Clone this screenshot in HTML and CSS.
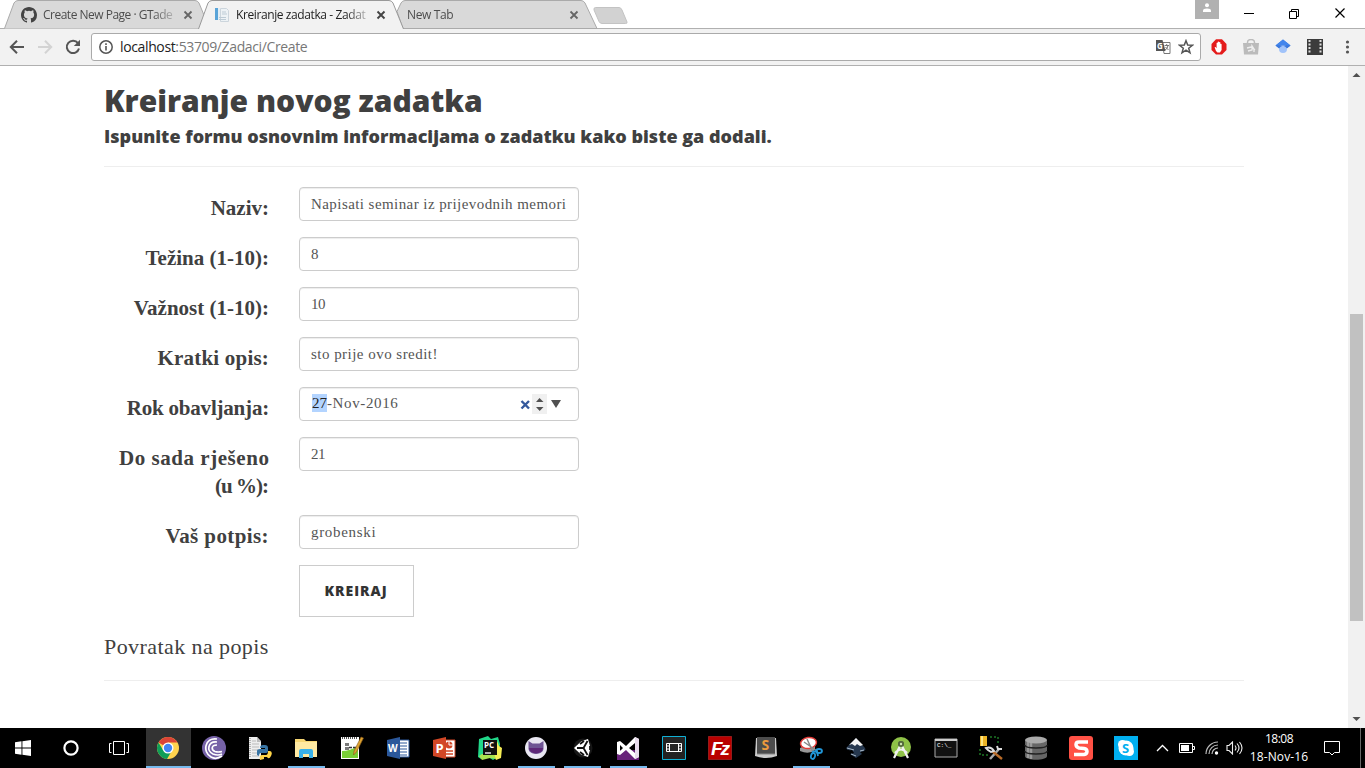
FILE: index.html
```html
<!DOCTYPE html>
<html lang="hr">
<head>
<meta charset="utf-8">
<title>Kreiranje zadatka</title>
<link rel="stylesheet" href="styles.css">
</head>
<body>
<div class="desktop">
  <header class="tabstrip">
    <div class="tab">
      <svg class="tab-shape" width="206" height="29"><path d="M0.5 28.5L10 3Q11.5 .5 14 .5H191Q193.500 .5 195 3L205.500 28.5" fill="#d9d9d9" stroke="#aaa"/></svg>
      <svg class="fav" width="16" height="16" viewBox="0 0 16 16"><path fill="#444" d="M8 0C3.580 0 0 3.580 0 8c0 3.540 2.290 6.530 5.470 7.590.4.070.55-.17.55-.38v-1.490c-2.010.37-2.530-.49-2.690-.94-.09-.23-.48-.94-.82-1.130-.28-.15-.68-.52-.01-.53.63-.01 1.080.58 1.230.82.72 1.210 1.870.87 2.330.66.07-.52.28-.87.51-1.070-1.780-.2-3.640-.89-3.640-3.950 0-.87.31-1.590.82-2.150-.08-.2-.36-1.020.08-2.120 0 0 .67-.21 2.200.82a7.600 7.600 0 014 0c1.530-1.040 2.200-.82 2.200-.82.44 1.100.16 1.920.08 2.120.51.56.82 1.270.82 2.150 0 3.070-1.870 3.750-3.650 3.950.29.25.54.73.54 1.480v2.200c0 .21.15.46.55.38A8 8 0 0016 8c0-4.420-3.580-8-8-8z"/></svg>
      <span class="tab-title tab-one">Create New Page · GTade</span>
      <svg class="close" width="10" height="10"><path d="M1.500 1.500l7 7m0-7l-7 7" stroke="#666" stroke-width="1.800"/></svg>
    </div>
    <div class="tab active">
      <svg class="tab-shape" width="206" height="29"><path d="M0.500 29L10 3Q11.500 .5 14 .5H191Q193.500 .5 195 3L205.500 29" fill="#f2f2f2" stroke="#999"/></svg>
      <svg class="fav" width="16" height="16"><path d="M1 1h3v12H1z" fill="#59a4d8"/><path d="M4 1h2v12H4z" fill="#e3eef5"/><path d="M6.500 1.500h6l2 2v11h-8z" fill="#edf2f5" stroke="#ccd5dc"/><path d="M8 5h4M8 7h5M5 10.500h7M5 12.500h7" stroke="#bdcbd5"/></svg>
      <span class="tab-title tab-two">Kreiranje zadatka - Zadat</span>
      <svg class="close" width="10" height="10"><path d="M1.500 1.500l7 7m0-7l-7 7" stroke="#444" stroke-width="1.900"/></svg>
    </div>
    <div class="tab plain">
      <svg class="tab-shape" width="206" height="29"><path d="M5 11.500L9 3Q10.500 .5 13 .5H189Q191.500 .5 193 3L205 28.500H11z" fill="#d9d9d9" stroke="#aaa"/></svg>
      <span class="tab-title tab-three">New Tab</span>
      <svg class="close" width="10" height="10"><path d="M1.500 1.500l7 7m0-7l-7 7" stroke="#666" stroke-width="1.800"/></svg>
    </div>
    <svg class="newtab" width="36" height="18"><path d="M2.500.5H26Q28 .5 29 3L34 15Q34.500 16.500 32.500 16.500H9Q7 16.500 6 14.500L1 3Q.5.5 2.500.5z" fill="#d2d2d2" stroke="#c3c3c3"/></svg>
    <div class="window-controls">
      <div class="user"><svg width="10" height="10"><circle cx="5" cy="2.200" r="2" fill="#fff"/><path d="M1 9V7.500Q1 5.500 5 5.500T9 7.500V9z" fill="#fff"/></svg></div>
      <svg class="caption" width="46" height="28"><path d="M17 13.500h10" stroke="#000"/></svg>
      <svg class="caption" width="46" height="28"><path d="M16.500 11.500h7v7h-7zM18.500 11V9.500h7v7H24" fill="none" stroke="#000"/></svg>
      <svg class="caption" width="46" height="28"><path d="M16.500 8.500l9 9m0-9l-9 9" stroke="#000" stroke-width="1.200"/></svg>
    </div>
  </header>
  <div class="toolbar">
    <svg width="16" height="16"><path d="M15 8H2.500M8 1.700L1.800 8L8 14.300" fill="none" stroke="#555" stroke-width="2"/></svg>
    <svg width="16" height="16"><path d="M1 8h12.500M8 1.700L14.200 8L8 14.300" fill="none" stroke="#d3d3d3" stroke-width="2"/></svg>
    <svg width="16" height="16"><path d="M13 4.200A6.200 6.200 0 1 0 14 9.500" fill="none" stroke="#555" stroke-width="2"/><path d="M15 .8v6.200H8.800z" fill="#555"/></svg>
    <div class="address">
      <svg width="14" height="14"><circle cx="7" cy="7" r="6.200" fill="none" stroke="#555" stroke-width="1.500"/><path d="M7 6v4.500M7 3.300v1.700" stroke="#555" stroke-width="1.600"/></svg>
      <span class="url"><b>localhost</b>:53709/Zadaci/Create</span>
      <svg class="translate" width="15" height="14"><path d="M6.500 2.500h7.500v11H8z" fill="#fff" stroke="#777"/><path d="M0 0h6.500L9.500 11H0z" fill="#555"/><text x="1" y="8.500" class="g-glyph">G</text><path d="M8.500 5.500h4.500M10.700 4v1.500M12 5.500Q11.500 9 9 10M9.500 7l3 3" stroke="#777" fill="none"/></svg>
      <svg width="16" height="16"><path d="M8 1.700l1.700 4.400 4.700.2-3.700 2.900 1.300 4.600L8 11.200l-4 2.600 1.300-4.600L1.600 6.300l4.700-.2z" fill="none" stroke="#555" stroke-width="1.500"/></svg>
    </div>
    <div class="extensions">
      <svg width="16" height="16"><path d="M5 .3h6L15.500 5v6L11 15.500H5L.5 11V5z" fill="#e41b1b"/><path d="M5 12L3.600 8.200l1-.3 1 1.300V4q.8-.8 1.200.1V7V2.800q.8-.8 1.300.1V7V3.300q.9-.7 1.300.2V7.500V5q.8-.6 1.200.2V11l-1.600 2.600H6.500z" fill="#fff"/></svg>
      <svg width="16" height="16"><path d="M0 4h16l-1 11.500H1z" fill="#bbb"/><path d="M4.500 5V3.500a3.500 3 0 0 1 7 0V5" fill="none" stroke="#bbb" stroke-width="1.500"/><path d="M5 12l4-1V7l2 3v3M4 9l4-1 4 3" stroke="#eee" stroke-width="1.300" fill="none"/></svg>
      <svg width="16" height="16"><path d="M8 .5l7.500 6L8 12.500L.5 6.500z" fill="#3b78dc"/><path d="M8 .5l7.500 6H.5z" fill="#4386ed"/><circle cx="8" cy="10" r="4" fill="#a1c3fa"/><path d="M.5 6.500L4 9.300Q8 4 12 9.300l3.500-2.800z" fill="#3b78dc"/></svg>
      <svg width="16" height="16"><path d="M0 0h16v16H0z" fill="#3c3c3c"/><path d="M2.500 1v14M13.500 1v14" stroke="#ddd" stroke-width="2" stroke-dasharray="2 1.500"/></svg>
      <svg width="16" height="16"><g fill="#555"><circle cx="8.500" cy="3" r="1.600"/><circle cx="8.500" cy="8" r="1.600"/><circle cx="8.500" cy="13" r="1.600"/></g></svg>
    </div>
  </div>
  <div class="viewport">
    <main class="page">
      <h2>Kreiranje novog zadatka</h2>
      <h4>Ispunite formu osnovnim informacijama o zadatku kako biste ga dodali.</h4>
      <hr>
      <div class="row"><label><span class="l1">Naziv:</span></label><div class="field"><span class="v1">Napisati seminar iz prijevodnih memori</span></div></div>
      <div class="row"><label><span class="l2">Težina (1-10):</span></label><div class="field">8</div></div>
      <div class="row"><label><span class="l3">Važnost (1-10):</span></label><div class="field"><span class="num">10</span></div></div>
      <div class="row"><label><span class="l4">Kratki opis:</span></label><div class="field"><span class="v4">sto prije ovo sredit!</span></div></div>
      <div class="row"><label><span class="l5">Rok obavljanja:</span></label><div class="field date"><span class="v5"><mark>27</mark>-Nov-2016</span>
        <svg class="date-controls" width="44" height="20"><path d="M2.500 7l7.500 7.500M10 7l-7.500 7.500" stroke="#34599c" stroke-width="2.400"/><path d="M13 0h15v20H13z" fill="#f0f0f0"/><path d="M17 8l3.500-4L24.500 8zM17 13l3.700 4L24.500 13zM32 6h10l-5 8z" fill="#505050"/></svg></div></div>
      <div class="row tall"><label><span class="l6">Do sada rješeno</span><br><span class="l7">(u %):</span></label><div class="field"><span class="num">21</span></div></div>
      <div class="row"><label><span class="l8">Vaš potpis:</span></label><div class="field"><span class="v8">grobenski</span></div></div>
      <button>KREIRAJ</button>
      <p><a>Povratak na popis</a></p>
      <hr>
    </main>
    <div class="scrollbar">
      <svg width="17" height="17"><path d="M4.500 11L8.500 7l4 4z" fill="#505050"/></svg>
      <div class="thumb"></div>
      <svg width="17" height="17"><path d="M4.500 6L8.500 10l4-4z" fill="#505050"/></svg>
    </div>
  </div>
  <footer class="taskbar">
    <div class="system">
      <svg width="16" height="16"><path d="M0 2.300L6.500 1.300V7.400H0zM7.400 1.200L16 0V7.400H7.400zM0 8.500H6.500V14.700L0 13.700zM7.400 8.500H16V16L7.400 14.800z" fill="#fff"/></svg>
      <svg width="16" height="16"><circle cx="8" cy="8" r="6.600" fill="none" stroke="#fff" stroke-width="2.200"/></svg>
      <svg width="20" height="16"><path d="M4.500 1.500h11v13h-11zM2.500 3.500h-2v9h2M17.500 3.500h2v9h-2" fill="none" stroke="#fff"/></svg>
    </div>
    <div class="apps">
      <div class="app current"><svg viewBox="0 0 24 24"><circle cx="12" cy="12" r="11" fill="#ffd34e"/><path d="M12 12L2.500 6.500A11 11 0 0 1 21.500 6.500H12z" fill="#db4437"/><path d="M2.500 6.500A11 11 0 0 0 11 23L16 14.500L7 14z" fill="#0f9d58"/><circle cx="12" cy="12" r="5.500" fill="#fff"/><circle cx="12" cy="12" r="4.200" fill="#4285f4"/></svg></div>
      <div class="app"><svg viewBox="0 0 24 24"><circle cx="12" cy="12" r="12" fill="#7662a7"/><g fill="none" stroke="#fff" stroke-width="1.700"><path d="M15 3C3 1 0 16 9 21q5 3 11-1"/><path d="M15 6C6 5 4 15 11 18q5 2 9 0"/><path d="M15 9C9 9 9 14 13 15.500q3 1 7 0"/></g></svg></div>
      <div class="app"><svg viewBox="0 0 24 24"><path d="M1 1h8l4 4v18H1z" fill="#eee"/><path d="M9 1l4 5H9z" fill="#bbb"/><path d="M4 5h4M4 8h7M4 11h7M4 14h6M4 17h6M4 20h7" stroke="#bbb"/><path d="M2 2v20" stroke="#777" stroke-dasharray="1 1"/><path d="M9 19v-4q0-2 3-2h5v-1h-5q0-3 3-3h2q3 0 3 3v3q0 2-3 2h-4q-2 0-2 3z" fill="#3874a3"/><path d="M12 24q-1-5 2-5h4q2 0 2-4h2q3 1 1 5t-4 1h-3v2z" fill="#ffd548"/></svg></div>
      <div class="app open"><svg viewBox="0 0 24 24"><path d="M1 3h9l2 2h11v16H1z" fill="#f7d673"/><path d="M1 6h22v15H1z" fill="#ffe9a2"/><path d="M5 22v-7q0-2 2-2h10q2 0 2 2v7h-4v-4H9v4z" fill="#39b0e8"/></svg></div>
      <div class="app"><svg viewBox="0 0 24 24"><path d="M1 1h18v22H1z" fill="#fff"/><path d="M2 15q8 0 16-5v12H2z" fill="#79cf36"/><path d="M2 2h16" stroke="#555" stroke-width="2" stroke-dasharray="1 1"/><path d="M6 7v8M8 7v8M9 11.500h7" stroke="#333" stroke-width="1.300" stroke-dasharray="3 1"/><path d="M21 1L14 15l-.5 4 3-3L23.500 2z" fill="#dca231" stroke="#865819" stroke-width=".6"/></svg></div>
      <div class="app"><svg viewBox="0 0 24 24"><path d="M12 4h11v17H12z" fill="#fff" stroke="#2b579a"/><path d="M13 7h8M13 10h8M13 13h8M13 16h8M13 19h8" stroke="#2b579a"/><path d="M1 4L14 1v22L1 20z" fill="#2b579a"/><text x="2" y="16" class="logo word">W</text></svg></div>
      <div class="app"><svg viewBox="0 0 24 24"><path d="M12 4h11v17H12z" fill="#fff" stroke="#d24726"/><circle cx="17" cy="9" r="3.500" fill="#d24726"/><path d="M17 5v4h4" fill="none" stroke="#fff"/><path d="M14 15h7M14 18h7" stroke="#d24726" stroke-width="1.500"/><path d="M1 4L14 1v22L1 20z" fill="#d24726"/><text x="3.500" y="17" class="logo ppt">P</text></svg></div>
      <div class="app"><svg viewBox="0 0 24 24"><path d="M1 3L10 0l3 3 7-2 2 7-2 13-5 3-5-3-7 2-3-2z" fill="#21d789"/><path d="M19 5l2 5 3 2-1 10-5 2-2-4z" fill="#f5ed55"/><path d="M1 20l3-2h12l2 5-6-1-8 2z" fill="#a8e34f"/><path d="M5 4h14v15H5z" fill="#101010"/><text x="6" y="12" class="logo pc">PC</text><path d="M7 17h6" stroke="#fff" stroke-width="1.300"/></svg></div>
      <div class="app open"><svg viewBox="0 0 24 24"><circle cx="12" cy="12" r="11" fill="#e9e7f2"/><path d="M4.500 5l4 2.500h7l4-2.500v6.500c1 8.500-16 8.500-15 0z" fill="#6e5494"/><path d="M5 12c1 7 13 7 14 0z" fill="#5d2778"/></svg></div>
      <div class="app open"><svg viewBox="0 0 24 24"><circle cx="13" cy="12" r="9.500" fill="#171717"/><path d="M4 12L11 5.500 18 3l2 7v4l-2 7-7-2.500z" fill="#fff"/><path d="M7 12h6.500l4-7M13.500 12l4 7M14 5l-4 3M14 19l-4-3M20 10v4" fill="none" stroke="#111" stroke-width="1.800"/></svg></div>
      <div class="app open"><svg viewBox="0 0 24 24"><path d="M1 14h22v10H1z" fill="#68217a"/><path d="M1 6l3-1 6 5 9-9 4 2v18l-4 2-9-9-6 5-3-1zM4 9v6l3-3zM19 7l-6 5 6 5z" fill="#fff" fill-rule="evenodd"/><path d="M19 1l4 2v18l-4 2z" fill="#e9dced"/></svg></div>
      <div class="app"><svg viewBox="0 0 24 24"><path d="M.5.500h23v23H.500z" fill="#222" stroke="#10b0d5"/><path d="M4.500 7.500h15v8h-15z" fill="#252525" stroke="#fff"/><path d="M7.500 7v9M16.500 7v9M4.500 10h3M4.500 13h3M16.500 10h3M16.500 13h3" stroke="#fff"/></svg></div>
      <div class="app"><svg viewBox="0 0 24 24"><path d="M.5.500h23v23H.500z" fill="#b90000" stroke="#d33434" stroke-dasharray="1 1"/><text x="3" y="19" class="logo fz">Fz</text></svg></div>
      <div class="app"><svg viewBox="0 0 24 24"><path d="M2 2h20l1 18q-11 4-22 0z" fill="#ccc"/><path d="M3 1h18v17H3z" fill="#4c4c4c"/><path d="M3 18h18" stroke="#888"/><text x="7.500" y="14" class="logo sublime">S</text></svg></div>
      <div class="app narrow open"><svg viewBox="0 0 24 24"><path d="M1 12q8-5 15-2v4q-6 5-15 1z" fill="#989898"/><ellipse cx="9.500" cy="7" rx="8" ry="5.500" fill="#fff" stroke="#e23c38" stroke-width="1.500" transform="rotate(-8 9.500 7)"/><path d="M8 3l6 13M5 6l13 9" stroke="#888" stroke-width="1.500"/><g fill="none" stroke="#2196d7" stroke-width="1.800"><ellipse cx="20" cy="15" rx="3" ry="2"/><ellipse cx="14" cy="20" rx="2" ry="3" transform="rotate(15 14 20)"/><path d="M13 16l5-1 1 5"/></g></svg></div>
      <div class="app narrow"><svg viewBox="0 0 24 24"><path d="M12 2L2 12q1 3 6 2l2 3-4 1 6 4 6-4-2-2q7-1 5-4z" fill="#26384f"/><path d="M12 2L5 9l3-1 3 2 2-2 3 2 3-1z" fill="#f4f4f4"/><path d="M3 12l7 2M7 18l5 2M16 15l4-1" stroke="#aabac9"/></svg></div>
      <div class="app narrow"><svg viewBox="0 0 24 24"><circle cx="12" cy="11" r="10" fill="#8fc248"/><circle cx="12" cy="8" r="3" fill="#617150"/><path d="M11 10L5 22M13 10l6 12M6 17q6-7 12 0" stroke="#f1f1f1" stroke-width="2.200" fill="none"/><circle cx="12" cy="8" r="3" fill="#52683a"/><circle cx="12" cy="8" r="1.200" fill="#cee5b5"/></svg></div>
      <div class="app narrow"><svg viewBox="0 0 24 24"><path d="M1 3h22v18H1z" fill="#111" stroke="#aaa"/><path d="M1 3h22v2H1z" fill="#ccc"/><text x="3" y="11" class="logo cmd">C:\_</text></svg></div>
      <div class="app narrow"><svg viewBox="0 0 24 24"><path d="M1 0h7v10H1z" fill="#edb526"/><path d="M2 0h2v10H2z" fill="#ffe783"/><path d="M11 1h8v8M1 13v6h8" fill="none" stroke="#2cb338" stroke-dasharray="2 2"/><path d="M20 13l-9 10" stroke="#aaa" stroke-width="2.500"/><path d="M13 15l10 8" stroke="#b86b28" stroke-width="2.500"/><path d="M7 12q5-2 8 3l-3 1-3-2zM18 10l1 3 4 0" fill="none" stroke="#ddd" stroke-width="2"/></svg></div>
      <div class="app narrow"><svg viewBox="0 0 24 24"><path d="M1 4v16c0 5 22 5 22 0V4z" fill="#666"/><path d="M4 5v17M7 6v17" stroke="#999" stroke-width="2.500"/><ellipse cx="12" cy="4" rx="11" ry="3.500" fill="#aaa"/><path d="M1 9c0 4 22 4 22 0M1 15c0 4 22 4 22 0" fill="none" stroke="#222" stroke-width="1.500"/></svg></div>
      <div class="app narrow"><svg viewBox="0 0 24 24"><rect width="24" height="24" rx="3" fill="#ff5145"/><path d="M19 6H10Q7 6 7 8.500T10 12l5 .5q3 .5 3 3T15 18.500H5" fill="none" stroke="#fff" stroke-width="3.500"/></svg></div>
      <div class="app narrow"><svg viewBox="0 0 24 24"><path d="M0 0h24v24H0z" fill="#00aff0"/><circle cx="12" cy="12" r="7.500" fill="#fff"/><circle cx="8.500" cy="8.500" r="4.500" fill="#fff"/><circle cx="15.500" cy="15.500" r="4.500" fill="#fff"/><text x="8" y="17" class="logo skype">S</text></svg></div>
    </div>
    <div class="tray">
      <svg width="13" height="8"><path d="M1 7l5.500-5.500L12 7" fill="none" stroke="#fff" stroke-width="1.300"/></svg>
      <svg width="16" height="10"><path d="M.5.500h13v9H.500zM14 3.500h1.500v3H14" fill="none" stroke="#fff"/><path d="M2 2h8v6H2z" fill="#fff"/></svg>
      <svg width="14" height="14"><g fill="none" stroke="#bbb" stroke-width="1.200"><path d="M1 13A12 12 0 0 1 13 1M4 13a9 9 0 0 1 9-9M7 13a6 6 0 0 1 6-6"/></g><circle cx="11.500" cy="12" r="1.700" fill="#fff"/></svg>
      <svg class="volume" width="18" height="14"><path d="M1 4.500h2L6.500 1v12L3 9.500H1zM9 4.500q2 2.500 0 5M11 2.500q4 4.500 0 9M13.500 1q5 6 0 12" fill="none" stroke="#eee" stroke-width="1.100"/></svg>
      <div class="clock"><span class="time">18:08</span><span class="day">18-Nov-16</span></div>
      <svg width="16" height="17"><path d="M.5 1.500h15v11H10.500L8 15l-2.500-2.500H.500z" fill="none" stroke="#fff"/></svg>
      <i class="show-desktop"></i>
    </div>
  </footer>
</div>
</body>
</html>
```

FILE: styles.css
```css
* { box-sizing: border-box; }
body { margin: 0; background: #fff; overflow: hidden; }
svg { display: block; flex: none; }
.desktop { width: 1365px; height: 768px; display: flex; flex-direction: column; }

.tabstrip { height: 29px; flex: none; display: flex; border-bottom: 1px solid #b0b0b0; padding-left: 4px; font: 12px "Open Sans", sans-serif; color: #4d4d4d; }
.tab { position: relative; isolation: isolate; width: 206px; height: 29px; margin-right: -12px; display: flex; align-items: center; padding: 1px 0 0 17px; flex: none; }
.tab.active { z-index: 2; color: #222; padding-left: 16px; }
.tab.plain { z-index: 1; padding-left: 15px; }
.tab-shape { position: absolute; left: 0; top: 0; z-index: -1; }
.tab-title { width: 133px; margin-left: 6px; white-space: nowrap; overflow: hidden; mask-image: linear-gradient(90deg, #000 82%, transparent 104%); line-height: 18px; }
.tab-one { letter-spacing: -.5px; }
.tab-two { letter-spacing: -.4px; }
.plain .tab-title { margin-left: 0; width: 155px; letter-spacing: -.35px; }
.close { margin-left: 7px; }
.newtab { margin: 7px 0 0 7px; }
.window-controls { margin-left: auto; display: flex; }
.user { width: 24px; height: 19px; background: #b1b1b1; display: flex; justify-content: center; padding-top: 3px; margin-right: 8px; }
.window-controls .caption { width: 46px; }

.toolbar { height: 37px; flex: none; background: #f2f2f2; border-bottom: 1px solid #b0b0b0; display: flex; align-items: center; padding-left: 9px; gap: 12px; }
.address { width: 1110px; height: 28px; margin-left: -2px; background: #fff; border: 1px solid #aaa; border-radius: 3px; display: flex; align-items: center; padding: 0 6px 0 7px; }
.url { margin-left: 7px; font: 14px "Open Sans", sans-serif; letter-spacing: -.37px; color: #777; padding-bottom: 1px; }
.url b { font-weight: 400; color: #222; }
.translate { margin: 0 7px 0 auto; }
.g-glyph { font: bold 8px "Open Sans", sans-serif; fill: #fff; }
.extensions { display: flex; gap: 16px; margin-left: -2px; }

.viewport { height: 662px; flex: none; display: flex; justify-content: space-between; }
.page { width: 1140px; margin-left: 104px; padding-top: 18px; font-family: "Liberation Serif", serif; font-size: 21px; color: #404040; }
h2, h4 { font-family: "Open Sans", sans-serif; font-weight: 800; margin: 0; white-space: nowrap; }
h2 { font-size: 30px; line-height: 33px; }
h4 { font-size: 18px; line-height: 20px; margin-top: 9px; }
hr { border: 0; border-top: 1px solid #eee; margin: 20px 0; }
.row { display: flex; gap: 30px; height: 34px; margin-bottom: 16px; }
.row.tall { height: 62px; }
label { width: 165px; text-align: right; font-weight: bold; line-height: 28px; padding-top: 7px; white-space: nowrap; flex: none; }
.field { width: 280px; height: 34px; border: 1px solid #ccc; border-radius: 4px; box-shadow: inset 0 1px 1px rgba(0,0,0,.075); padding: 0 11px; font-size: 15px; line-height: 32px; color: #555; white-space: nowrap; overflow: hidden; }
.date { display: flex; align-items: center; justify-content: space-between; padding: 0 15px 0 12px; }
mark { background: #b3d4ff; color: #222; padding: 1px 0; }
.v1 { letter-spacing: .43px; }
.v4 { letter-spacing: .47px; }
.v5 { letter-spacing: .62px; line-height: 30px; padding-bottom: 2px; }
.v5 mark { letter-spacing: 0; }
.v8 { letter-spacing: .68px; }
.num { letter-spacing: -.4px; }
.l4 { letter-spacing: .2px; }
.l5 { letter-spacing: -.2px; }
.l6 { letter-spacing: .55px; margin-right: -.5px; }
.l7 { letter-spacing: -1px; margin-right: 1px; }
.l8 { letter-spacing: .4px; }
button { display: block; margin-left: 195px; width: 115px; height: 52px; border: 1px solid #ccc; background: #fff; color: #333; font: 800 14px "Open Sans", sans-serif; letter-spacing: 1px; padding: 0 1px 2px 0; }
.page p { margin: 15px 0 0; line-height: 29px; font-size: 22px; letter-spacing: .42px; }
.page p + hr { margin-top: 19px; }
.scrollbar { width: 17px; background: #f1f1f1; display: flex; flex-direction: column; }
.thumb { width: 13px; height: 307px; background: #c1c1c1; margin: 231px 2px auto; }

.taskbar { height: 40px; flex: none; background: #000; display: flex; color: #fff; }
.system { width: 145px; display: flex; align-items: center; padding-left: 15px; gap: 32px; }
.system svg:last-child { margin-left: -2px; }
.apps { display: flex; }
.app { width: 46px; height: 40px; display: flex; justify-content: center; align-items: center; background-size: 37px 2px; background-position: center bottom; background-repeat: no-repeat; }
.app.narrow { width: 45px; padding-right: 1px; }
.app svg { width: 24px; height: 24px; }
.app.current { background: linear-gradient(#76b9ed, #76b9ed) 1px 38px / 45px 2px no-repeat, linear-gradient(#333, #333) 1px 0 / 45px 40px no-repeat; }
.app.open { background-image: linear-gradient(#76b9ed, #76b9ed); }
.logo { font-family: "Open Sans", sans-serif; font-weight: 700; fill: #fff; }
.word { font-size: 10px; }
.ppt { font-size: 13px; }
.pc { font-size: 8px; }
.fz { font: italic 700 19px "Liberation Sans", sans-serif; letter-spacing: -2px; }
.sublime { font-size: 14px; fill: #ed9a3d; }
.cmd { font: 6px "Liberation Mono", monospace; }
.skype { font-size: 13px; fill: #00aff0; }
.tray { flex: 1; display: flex; align-items: center; padding-left: 7px; gap: 10px; }
.volume { margin-left: -3px; }
.clock { width: 70px; display: flex; flex-direction: column; align-items: center; font: 12px/18px "Open Sans", sans-serif; white-space: nowrap; margin-left: -10px; }
.time { letter-spacing: -.5px; }
.day { letter-spacing: .1px; }
.show-desktop { width: 1px; height: 40px; background: #666; margin-left: auto; margin-right: 4px; }
```
